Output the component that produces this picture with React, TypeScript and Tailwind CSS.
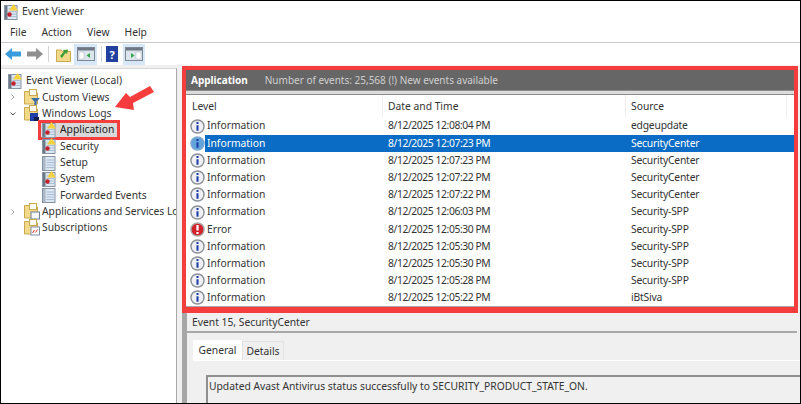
const rows = [
  ["Information", "8/12/2025 12:08:04 PM", "edgeupdate"],
  ["Information", "8/12/2025 12:07:23 PM", "SecurityCenter"],
  ["Information", "8/12/2025 12:07:23 PM", "SecurityCenter"],
  ["Information", "8/12/2025 12:07:22 PM", "SecurityCenter"],
  ["Information", "8/12/2025 12:07:22 PM", "SecurityCenter"],
  ["Information", "8/12/2025 12:06:03 PM", "Security-SPP"],
  ["Error", "8/12/2025 12:05:30 PM", "Security-SPP"],
  ["Information", "8/12/2025 12:05:30 PM", "Security-SPP"],
  ["Information", "8/12/2025 12:05:30 PM", "Security-SPP"],
  ["Information", "8/12/2025 12:05:28 PM", "Security-SPP"],
  ["Information", "8/12/2025 12:05:22 PM", "iBtSiva"],
];

function LogIcon({ warn = false }: { warn?: boolean }) {
  return (
    <svg width="14" height="16" viewBox="0 0 14 16" className="shrink-0">
      <rect x="0.5" y="1.5" width="12.5" height="14" fill="#dce6f1" stroke="#8794a3" />
      <rect x="1" y="2" width="2.5" height="13" fill={warn ? "#6d7a8a" : "#aab8c8"} />
      <path d="M4.5 5h7.5M4.5 7.5h7.5M4.5 10h7.5M4.5 12.5h7.5" stroke="#a9bfd6" />
      {warn && <path d="M9.5 0 14 6.5H5z" fill="#f7d23e" />}
      {warn && <circle cx="5.5" cy="10.5" r="2.2" fill="#c4202c" />}
    </svg>
  );
}

function FolderIcon({ badge }: { badge?: string }) {
  return (
    <svg width="16" height="17" viewBox="0 0 16 17" className="shrink-0">
      <path d="M0.5 2.5h4.5l1 1.5h7.5v11h-13z" fill="#f3d98a" stroke="#c9a94f" />
      <rect x="5.5" y="0.5" width="7" height="6" fill="#fdfbef" stroke="#c9a94f" />
      {badge === "filter" && <path d="M7 9h9l-3.4 3.4V17h-2.2v-4.6z" fill="#3f6fa8" />}
      {badge === "logs" && <rect x="6" y="8" width="8" height="8" fill="#1f3fa8" />}
      {badge === "logs" && <rect x="10" y="12" width="5" height="4" fill="#111d4d" />}
      {badge === "app" && <rect x="7" y="9" width="8.5" height="7" fill="#f4f6f8" stroke="#6f7f92" />}
      {badge === "sub" && <rect x="7" y="8" width="8.5" height="8" fill="#fff" stroke="#7f8fa8" />}
      {badge === "sub" && <path d="M8.5 14l2-3M13.5 10.5l-2 3" stroke="#d0342c" fill="none" />}
    </svg>
  );
}

function LevelIcon({ error = false, selected = false }: { error?: boolean; selected?: boolean }) {
  return (
    <svg width="15" height="15" viewBox="0 0 16 16" className="shrink-0">
      <circle cx="8" cy="8" r="7" fill={error ? "#d3222c" : selected ? "#62a3dc" : "#eef0f3"} stroke={error ? "#a9a9a9" : selected ? "#7fa9cf" : "#8b8f96"} strokeWidth="1.5" />
      {error ? (
        <path d="M8 3.2v5.8M8 10.6v2.2" stroke="#fff" strokeWidth="2.4" />
      ) : (
        <path d="M8 3.2v2M8 6.6v6" stroke="#1f3fa8" strokeWidth="2.2" />
      )}
    </svg>
  );
}

function PaneIcon({ side }: { side: "left" | "right" }) {
  return (
    <svg width="18" height="16" viewBox="0 0 18 16">
      <rect x="0.5" y="1.5" width="17" height="13" fill="#dde5ec" stroke="#7d8894" />
      <rect x="1" y="2" width="16" height="2.5" fill="#6d7884" />
      <rect x={side === "left" ? 2 : 11} y="6" width="5" height="7" fill="#fff" stroke="#a9b3bd" strokeWidth="0.5" />
      <path d={side === "left" ? "M13 7v5l-3.5-2.5z" : "M6 7v5l3.5-2.5z"} fill="#35a845" />
    </svg>
  );
}

function NavArrow({ color, flip = false }: { color: string; flip?: boolean }) {
  return (
    <svg width="16" height="12" viewBox="0 0 16 12" className={flip ? "-scale-x-100" : ""}>
      <path d="M0 6 7 0v3.4h9v5.2H7V12z" fill={color} />
    </svg>
  );
}

function TreeItem({ label, children, indent, caret, selected }: { label: string; children: React.ReactNode; indent: string; caret?: string; selected?: boolean }) {
  return (
    <div className={`flex h-[16.3px] items-center ${indent}`}>
      {caret === "right" && (
        <svg width="16" height="10" viewBox="0 0 16 10" className="shrink-0">
          <path d="M3.5 2.5 6 5 3.5 7.5" fill="none" stroke="#a6a6a6" />
        </svg>
      )}
      {caret === "down" && (
        <svg width="16" height="10" viewBox="0 0 16 10" className="shrink-0">
          <path d="M2.5 3.5 5 6 7.5 3.5" fill="none" stroke="#555" />
        </svg>
      )}
      {selected ? (
        <div className="-ml-[4px] flex h-[20px] w-[82px] shrink-0 items-center gap-[4px] border-[3px] border-[#f53d3d] bg-[#d9d9d9] pl-[1px]">
          {children}
          <span className="text-[#1a1a1a]">{label}</span>
        </div>
      ) : (
        <div className={`flex items-center whitespace-nowrap ${caret || indent === "pl-[16px]" ? "gap-[2px]" : "gap-[4px]"}`}>
          {children}
          <span>{label}</span>
        </div>
      )}
    </div>
  );
}

export default function App() {
  return (
    <div className="relative flex h-[404px] w-[801px] flex-col overflow-hidden border border-black bg-white font-['Noto_Sans',sans-serif] text-[10.3px] text-[#333]">
      <div className="flex h-[21px] shrink-0 items-center gap-[4px] pl-[3px]">
        <LogIcon warn />
        <span className="pt-[1px]">Event Viewer</span>
      </div>
      <div className="flex h-[21px] shrink-0 items-center gap-[15px] border-b border-[#c8c8c8] pl-[9px] pt-[2px]">
        <span>File</span>
        <span>Action</span>
        <span>View</span>
        <span>Help</span>
      </div>
      <div className="flex h-[22px] shrink-0 items-center pl-[4px]">
        <NavArrow color="#3a9bdc" />
        <div className="ml-[6px]">
          <NavArrow color="#8f8f8f" flip />
        </div>
        <div className="ml-[5px] h-[16px] w-px bg-[#d4d4d4]" />
        <div className="ml-[7px] flex w-[15px]">
          <svg width="15" height="15" viewBox="0 0 15 15">
            <path d="M0.5 3h5l1 1.5h8v10h-14z" fill="#f3d98a" stroke="#c9a94f" />
            <path d="M4 9 8 4.5 7 3l5-.5-1 4.5-1.5-1L6 11z" fill="#3f9e3a" />
          </svg>
        </div>
        <div className="ml-[3px] flex h-[21px] w-[23px] items-center justify-center bg-[#d6e8f7]">
          <PaneIcon side="left" />
        </div>
        <div className="ml-[4px] h-[16px] w-px bg-[#d4d4d4]" />
        <div className="ml-[4px] flex h-[16px] w-[12px] items-center justify-center bg-[#22409f] text-[11px] font-bold leading-none text-white">?</div>
        <div className="ml-[5px] flex h-[21px] w-[22px] items-center justify-center bg-[#d6e8f7]">
          <PaneIcon side="right" />
        </div>
      </div>

      <div className="flex min-h-0 flex-1 bg-[#f0f0f0]">
        <div className="mt-[3px] flex w-[176px] shrink-0 flex-col overflow-hidden whitespace-nowrap border-r border-t border-[#a8a8a8] border-t-[#d8d8d8] bg-white pl-[7px] pt-[4px]">
          <TreeItem label="Event Viewer (Local)" indent="">
            <LogIcon warn />
          </TreeItem>
          <TreeItem label="Custom Views" indent="" caret="right">
            <FolderIcon badge="filter" />
          </TreeItem>
          <TreeItem label="Windows Logs" indent="" caret="down">
            <FolderIcon badge="logs" />
          </TreeItem>
          <TreeItem label="Application" indent="pl-[34px]" selected>
            <LogIcon warn />
          </TreeItem>
          <TreeItem label="Security" indent="pl-[34px]">
            <LogIcon warn />
          </TreeItem>
          <TreeItem label="Setup" indent="pl-[34px]">
            <LogIcon />
          </TreeItem>
          <TreeItem label="System" indent="pl-[34px]">
            <LogIcon warn />
          </TreeItem>
          <TreeItem label="Forwarded Events" indent="pl-[34px]">
            <LogIcon />
          </TreeItem>
          <TreeItem label="Applications and Services Logs" indent="" caret="right">
            <FolderIcon badge="app" />
          </TreeItem>
          <TreeItem label="Subscriptions" indent="pl-[16px]">
            <FolderIcon badge="sub" />
          </TreeItem>
        </div>

        <div className="mr-[2px] flex min-w-0 flex-1 flex-col pl-[5px] pt-[1px]">
          <div className="flex h-[247px] shrink-0 flex-col border-4 border-b-[6px] border-[#f53d3d] bg-white">
            <div className="flex h-[20px] shrink-0 items-center gap-[17px] bg-[#666] pl-[5px] pt-[1px] text-[10px] text-[#cfcfcf]">
              <span className="font-bold text-white">Application</span>
              <span>Number of events: 25,568 (!) New events available</span>
            </div>
            <div className="h-[5px] shrink-0 border-y border-[#8c8c8c] bg-[#dcdcdc]" />
            <div className="grid h-[22px] shrink-0 grid-cols-[202px_243px_1fr] items-center">
              <span className="mr-[5px] flex h-full items-center border-r border-[#eeeeee] pl-[6px] pt-[2px]">Level</span>
              <span className="mr-[5px] flex h-full items-center border-r border-[#eeeeee] pt-[2px]">Date and Time</span>
              <span className="mr-[7px] flex h-full items-center border-r border-[#eeeeee] pt-[2px]">Source</span>
            </div>
            <div className="flex min-h-0 flex-1 flex-col overflow-hidden border-b border-[#a8a8a8] pt-[0.5px]">
              {rows.map((r, i) => (
                <div key={i} className="relative grid h-[17.2px] shrink-0 grid-cols-[202px_243px_1fr] items-center">
                  {i === 1 && <div className="absolute inset-y-0 left-[19px] right-0 bg-[#0a6cc4]" />}
                  <div className="relative flex items-center gap-[2px] pl-[4px]">
                    <LevelIcon error={r[0] === "Error"} selected={i === 1} />
                    <span className={i === 1 ? "text-white" : ""}>{r[0]}</span>
                  </div>
                  <span className={`relative tracking-[-0.4px] ${i === 1 ? "text-white" : ""}`}>{r[1]}</span>
                  <span className={`relative tracking-[-0.2px] ${i === 1 ? "text-white" : ""}`}>{r[2]}</span>
                </div>
              ))}
            </div>
          </div>

          <div className="-mr-[2px] flex min-h-0 flex-1 flex-col border-l-[5px] border-[#a6a6a6] bg-[#f0f0f0]">
            <div className="mr-[3px] flex h-[20px] shrink-0 items-center border-b-2 border-[#a8a8a8] pl-[5px] pt-[1px]">Event 15, SecurityCenter</div>
            <div className="flex flex-1 flex-col pl-[6px] pt-[7px]">
              <div className="flex h-[20px] shrink-0 items-end">
                <div className="flex h-[20px] w-[49px] items-center justify-center bg-white pt-[1px]">General</div>
                <div className="flex h-[19px] w-[42px] items-center justify-center border border-b-0 border-[#e2e2e2] pt-[2px]">Details</div>
              </div>
              <div className="flex-1 border-t border-white pl-[13px] pt-[14px]">
                <div className="h-full border-l-2 border-t-2 border-[#8f8f8f] pl-[1px] pt-[2px]">Updated Avast Antivirus status successfully to SECURITY_PRODUCT_STATE_ON.</div>
              </div>
            </div>
          </div>
        </div>
      </div>

      <svg width="44" height="30" viewBox="0 0 44 30" className="absolute left-[111px] top-[83px]">
        <path d="M3 23 14 9l4 4L38 2l4 6-21 11 1 7z" fill="#f53d3d" />
      </svg>
    </div>
  );
}
